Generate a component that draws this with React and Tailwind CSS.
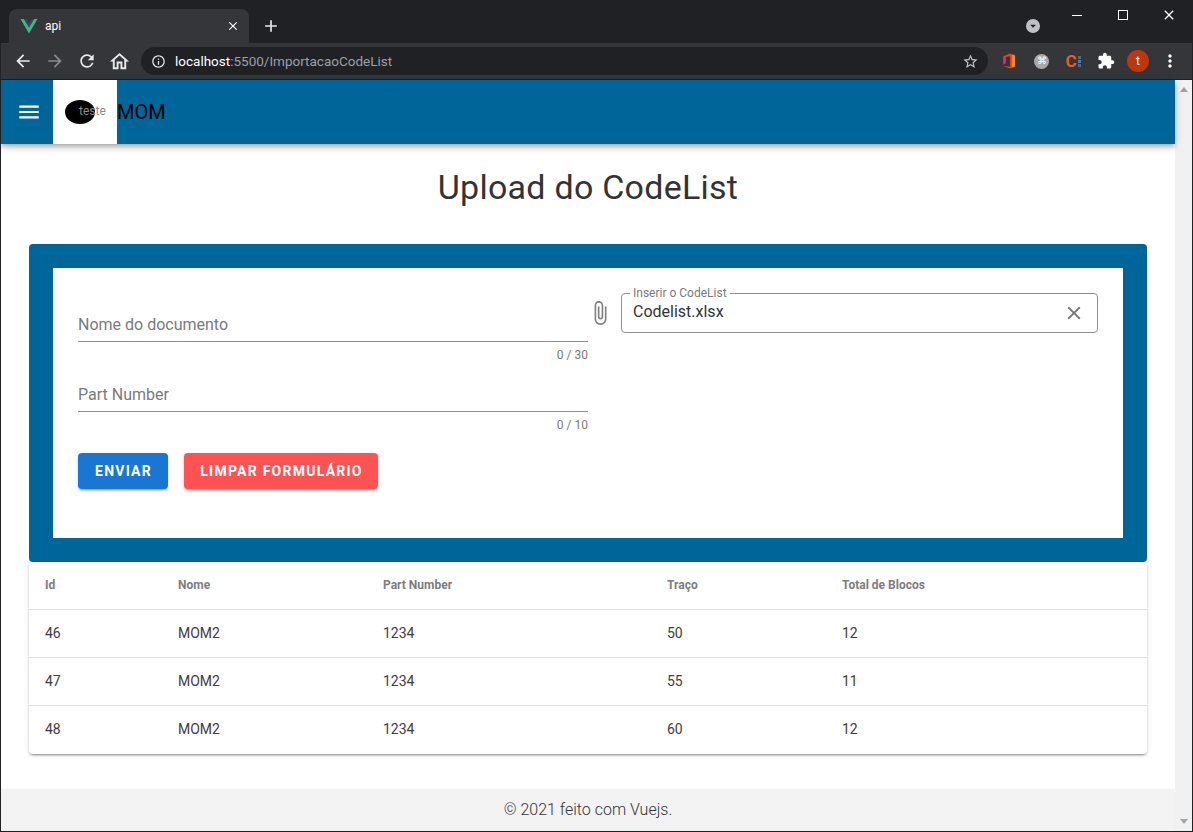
import React from 'react';
import {
  MdArrowBack, MdArrowForward, MdRefresh, MdOutlineHome, MdInfoOutline, MdStarBorder,
  MdExtension, MdMoreVert, MdClose, MdAdd, MdMenu, MdAttachFile, MdArrowDropDown,
} from 'react-icons/md';

const rows = [
  { id: 46, nome: 'MOM2', part: '1234', traco: 50, blocos: 12 },
  { id: 47, nome: 'MOM2', part: '1234', traco: 55, blocos: 11 },
  { id: 48, nome: 'MOM2', part: '1234', traco: 60, blocos: 12 },
];

const cols = 'grid grid-cols-[133px_205px_284px_175px_1fr] pl-4 pb-px';

const TabStrip = () => (
  <div className="flex h-[43px] shrink-0 bg-[#202124] pl-[8px] pt-[9px]">
    <div className="flex h-[34px] w-[240px] items-center rounded-t-lg bg-[#35363a] pl-3 pr-[9px] text-white">
      <svg width="18" height="16" viewBox="0 0 18 16" className="mr-[7px] ml-[-1px]">
        <path d="M0.5 1 L9 15.5 L17.5 1 L14 1 L9 9.5 L4 1 Z" fill="#41b883" />
        <path d="M4 1 L9 9.5 L14 1 L11.5 1 L9 5 L6.5 1 Z" fill="#34495e" />
      </svg>
      <span className="text-xs">api</span>
      <MdClose size={14} className="ml-auto" />
    </div>
    <MdAdd size={20} className="ml-[12px] mt-[7px] text-[#e8eaed]" />
    <div className="ml-auto flex h-[34px] items-start">
      <div className="mr-[14px] mt-[10px] flex h-[14px] w-[14px] items-center justify-center rounded-full bg-[#bdc1c6]">
        <MdArrowDropDown size={16} className="text-[#202124]" />
      </div>
      <div className="-mt-[9px] flex h-[30px] items-center text-white">
        <div className="flex w-[46px] justify-center">
          <div className="h-px w-[10px] bg-white" />
        </div>
        <div className="flex w-[46px] justify-center">
          <div className="h-[10px] w-[10px] border border-white" />
        </div>
        <div className="flex w-[46px] justify-center">
          <MdClose size={16} />
        </div>
      </div>
    </div>
  </div>
);

const Toolbar = () => (
  <div className="flex h-[37px] shrink-0 items-center border-b border-[#202124] bg-[#35363a] pl-[12px] text-[#e8eaed]">
    <MdArrowBack size={20} />
    <MdArrowForward size={20} className="ml-[12px] text-[#8a8b8d]" />
    <MdRefresh size={20} className="ml-[12px]" />
    <MdOutlineHome size={23} className="ml-[11px]" />
    <div className="ml-[10px] flex h-[28px] w-[847px] items-center rounded-full bg-[#202124] pl-[10px] pr-[9px]">
      <MdInfoOutline size={15} />
      <span className="ml-[9px] text-[13.5px] text-white">localhost</span>
      <span className="text-[13.5px] text-[#9aa0a6]">:5500/ImportacaoCodeList</span>
      <MdStarBorder size={17} className="ml-auto text-[#c4c7c9]" />
    </div>
    <div className="ml-[13px] flex items-center">
      <svg width="16" height="16" viewBox="0 0 16 16">
        <path d="M9 0.5 L14 2 V14 L9 15.5 L2 13 L9 13.8 V3 L5 4 V10 L2 11.5 V3.5 Z" fill="#e8431f" />
        <path d="M2 3.5 L5 4 V10 L2 11.5 Z" fill="#d3267f" />
        <path d="M11 2 L14 2.5 V13.5 L11 14 Z" fill="#f58a1f" />
      </svg>
      <div className="ml-[17px] flex h-[15px] w-[15px] items-center justify-center rounded-full bg-[#a8a8a8] text-[10px] leading-none text-white">⌘</div>
      <div className="ml-[13px] flex w-[22px] items-center justify-center">
        <span className="text-[17px] font-bold leading-none text-[#f0562b]">C</span>
        <span className="ml-px flex flex-col gap-px">
          <span className="h-[3px] w-[3px] bg-[#666]" />
          <span className="h-[3px] w-[3px] bg-[#2b86e0]" />
          <span className="h-[3px] w-[3px] bg-[#666]" />
        </span>
      </div>
      <MdExtension size={18} className="ml-[13px] text-white" />
      <div className="ml-[12px] flex h-[22px] w-[22px] items-center justify-center rounded-full bg-[#bf360c] text-xs text-white">t</div>
      <MdMoreVert size={20} className="ml-[11px] text-white" />
    </div>
  </div>
);

const AppBar = () => (
  <header className="relative z-10 flex h-16 shrink-0 items-center bg-[#006699] shadow-[0_2px_4px_-1px_rgba(0,0,0,0.2),0_4px_5px_0_rgba(0,0,0,0.14),0_1px_10px_0_rgba(0,0,0,0.12)]">
    <div className="flex w-[52px] justify-center pl-[4px]">
      <MdMenu size={26} className="text-white" />
    </div>
    <div className="relative h-16 w-16 bg-white">
      <div className="absolute left-[12px] top-[20px] h-[24px] w-[30px] rounded-[50%] bg-black" />
      <span className="absolute left-[26px] top-[23px] text-xs leading-4 text-[#8d8d8d]">teste</span>
    </div>
    <span className="text-xl text-black">MOM</span>
  </header>
);

const TextField = ({ label, counter }) => (
  <div className="h-[70px]">
    <div className="flex h-[49px] items-end border-b border-[#8f8f8f] pb-[6px] text-base leading-5 text-[#7a7a7a]">{label}</div>
    <div className="mt-[7px] text-right text-xs leading-3 text-[#7a7a7a]">{counter}</div>
  </div>
);

const FileField = () => (
  <div className="relative flex h-10 flex-1 items-center rounded border border-[#8f8f8f] pl-[11px] pr-[12px]">
    <span className="absolute left-[8px] top-[-7px] bg-white px-[3px] text-xs leading-3 text-[#7a7a7a]">Inserir o CodeList</span>
    <span className="mt-[-2px] text-base text-[#333]">Codelist.xlsx</span>
    <MdClose size={22} className="ml-auto text-[#757575]" />
  </div>
);

const UploadCard = () => (
  <div className="rounded bg-[#006699] p-6">
    <div className="h-[270px] bg-white px-[25px] pt-[25px]">
      <div className="flex items-start">
        <div className="w-[510px]">
          <TextField label="Nome do documento" counter="0 / 30" />
          <TextField label="Part Number" counter="0 / 10" />
        </div>
        <MdAttachFile size={26} className="mt-[7px] mr-[8px] ml-[-1px] shrink-0 text-[#808080]" />
        <FileField />
      </div>
      <div className="mt-[20px] flex gap-4">
        <button className="h-9 w-[90px] rounded bg-[#1976d2] pl-px text-sm font-bold uppercase tracking-[1.25px] text-white shadow-[0_3px_1px_-2px_rgba(0,0,0,0.2),0_2px_2px_0_rgba(0,0,0,0.14),0_1px_5px_0_rgba(0,0,0,0.12)]">Enviar</button>
        <button className="h-9 w-[194px] rounded bg-[#ff5252] pl-px text-sm font-bold uppercase tracking-[1.25px] text-white shadow-[0_3px_1px_-2px_rgba(0,0,0,0.2),0_2px_2px_0_rgba(0,0,0,0.14),0_1px_5px_0_rgba(0,0,0,0.12)]">Limpar formulário</button>
      </div>
    </div>
  </div>
);

const DataTable = () => (
  <div className="rounded-b bg-white shadow-[0_3px_1px_-2px_rgba(0,0,0,0.2),0_2px_2px_0_rgba(0,0,0,0.14),0_1px_5px_0_rgba(0,0,0,0.12)]">
    <div className={`${cols} h-12 items-center border-b border-[#e0e0e0] text-xs font-bold text-[#7d7d7d]`}>
      <span>Id</span>
      <span>Nome</span>
      <span>Part Number</span>
      <span>Traço</span>
      <span>Total de Blocos</span>
    </div>
    {rows.map((row, i) => (
      <div key={row.id} className={`${cols} h-12 items-center border-b text-sm text-[#3d3d3d] ${i < rows.length - 1 ? 'border-[#e0e0e0]' : 'border-transparent'}`}>
        <span>{row.id}</span>
        <span>{row.nome}</span>
        <span>{row.part}</span>
        <span>{row.traco}</span>
        <span>{row.blocos}</span>
      </div>
    ))}
  </div>
);

const Scrollbar = () => (
  <div className="flex w-[17px] shrink-0 flex-col items-center justify-between bg-[#f1f1f1] py-[7px]">
    <div className="h-0 w-0 border-x-[4px] border-b-[5px] border-x-transparent border-b-[#a3a3a3]" />
    <div className="h-0 w-0 border-x-[4px] border-t-[5px] border-x-transparent border-t-[#a3a3a3]" />
  </div>
);

export default function App() {
  return (
    <div className="flex h-screen flex-col overflow-hidden border-x border-b border-[#202124] bg-white [font-family:Roboto,sans-serif]">
      <TabStrip />
      <Toolbar />
      <div className="flex min-h-0 flex-1">
        <div className="flex min-w-0 flex-1 flex-col">
          <AppBar />
          <main className="flex-1 px-7">
            <h1 className="mt-[23px] mb-[37px] text-center text-[34px] leading-10 tracking-[0.25px] text-[#333]">Upload do CodeList</h1>
            <UploadCard />
            <DataTable />
          </main>
          <footer className="flex h-[42px] shrink-0 items-center justify-center bg-[#f3f3f3] text-base font-light text-[#333]">© 2021 feito com Vuejs.</footer>
        </div>
        <Scrollbar />
      </div>
    </div>
  );
}
